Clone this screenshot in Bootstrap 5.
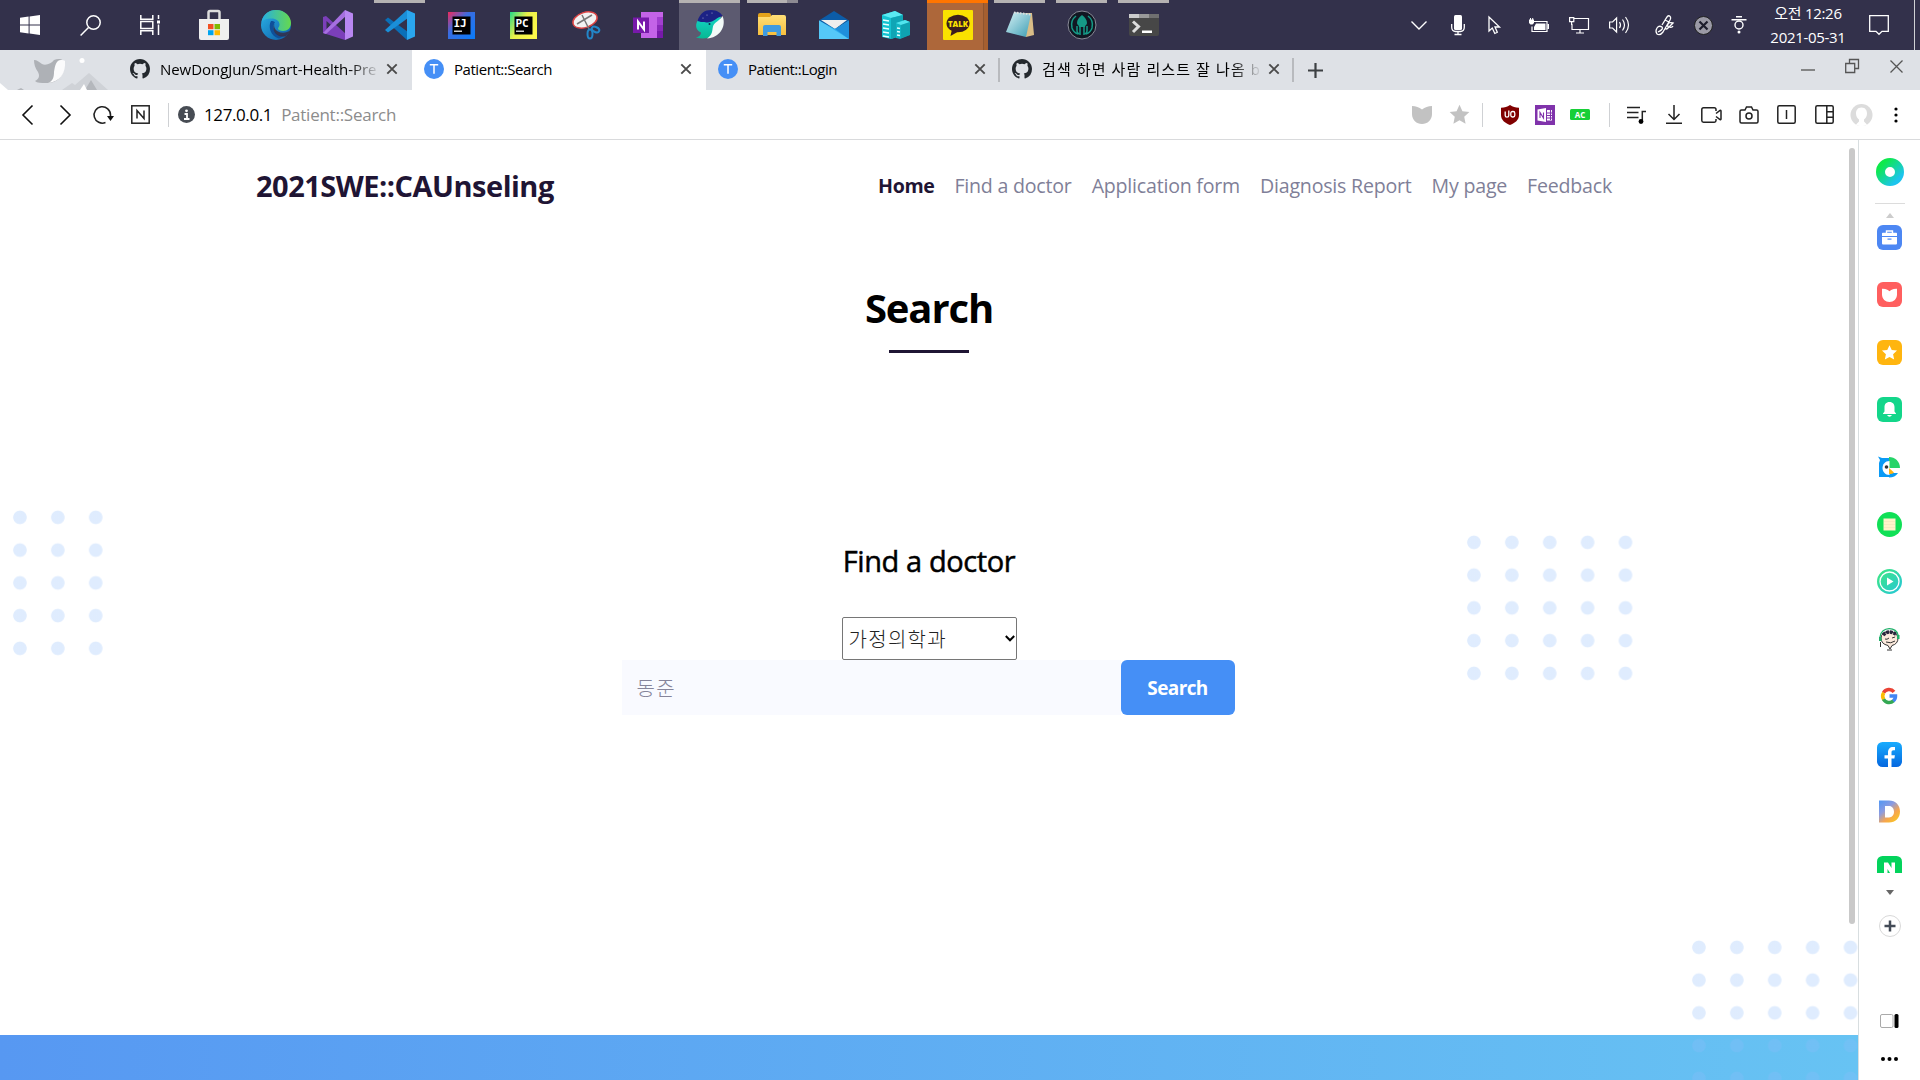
<!DOCTYPE html>
<html lang="ko">
<head>
<meta charset="utf-8">
<title>Patient::Search</title>
<link href="https://cdn.jsdelivr.net/npm/bootstrap@5.3.0/dist/css/bootstrap.min.css" rel="stylesheet">
<style>
body{width:1920px;height:1080px;overflow:hidden;font-family:"Open Sans","Noto Sans CJK KR",sans-serif;color:#000;background:#fff}
svg{flex:none;display:block;overflow:visible}
.cell{display:flex;align-items:center;justify-content:center;flex:none}
/* taskbar */
.taskbar{height:50px;background:#33314b;color:#fff}
.sys{width:60px;height:50px}
.app{width:61px;height:50px;margin-right:1px}
.apps{margin-left:3px}
.run{background:linear-gradient(#b5b2b2,#b5b2b2) 5px 0/51px 3px no-repeat}
.multi{background:linear-gradient(90deg,#b5b2b2 40px,#8d8a92 40px) 6px 0/51px 3px no-repeat}
.active-app{background:linear-gradient(#b5b2b2 3px,#5c5a70 3px)}
.alert-app{background:linear-gradient(#ff7500,#ff7500) 0 0/100% 3px no-repeat,linear-gradient(90deg,#ad673a 56px,#8f552f 56px,#8f552f 57px,#a55f30 57px)}
.clock{width:112px;font-size:15px;line-height:24px;letter-spacing:-.3px;text-align:center}
/* tab strip */
.tabstrip{height:40px;background:#dee1e6;font-size:15px;letter-spacing:-.45px}
.scene{width:118px;height:40px}
.btab{width:294px;height:40px;padding:0 12px 2px;position:relative}
.btab.on{background:#fff}
.btab.div::after{content:"";width:2px;height:24px;background:#b8babe;position:absolute;right:0;top:8px}
.ttl{width:218px;margin:0 8px 0 10px;white-space:nowrap;overflow:hidden;line-height:24px}
.fade-r{-webkit-mask-image:linear-gradient(90deg,#000 190px,transparent 220px)}
.wide{letter-spacing:-.05px}
.ko{letter-spacing:1.1px;font-size:15px}
/* toolbar */
.toolbar{height:50px;border-bottom:1px solid #d9dadc;background:#fff}
.vline{width:1px;height:24px;background:#cfd1d4}
.tray-end{width:26px;padding-left:14px}
.w11{width:11px}.w13{width:13px}.w14{width:14px}.w22{width:22px}.w23{width:23px}.w26{width:26px}.w30{width:30px}.w32{width:32px}.w34{width:34px}.w36{width:36px}.w37{width:37px}.w38{width:38px}.w39{width:39px}.w40{width:40px}.w42{width:42px}.w44{width:44px}.w46{width:46px}.w58{width:58px}
.url{font-size:17px;letter-spacing:-.4px;margin-left:6px}
.url span{color:#8c8c8c;margin-left:9px;letter-spacing:-.25px}
.tools{padding-right:6px}
.winbtns{padding-right:2px}
/* page */
.page{width:1858px;height:940px;position:relative;overflow:hidden}
.sitenav{padding:0 246px 2px 256px;height:93px}
.brandname{font-size:29px;font-weight:700;color:#1f1534;letter-spacing:-.5px}
.menu{gap:20px;font-size:19.6px;letter-spacing:-.22px;color:#7f7f98}
.menu a{color:inherit;text-decoration:none}
.menu a.cur{color:#1f1534;font-weight:700;letter-spacing:-.4px}
.pagehead{height:120px}
.pagehead h1{font-size:40px;font-weight:700;letter-spacing:-1.1px;line-height:50px;margin:50px 0 17px}
.bar{width:80px;height:3px;flex:none;background:#1f1534}
.finder{margin-top:188px}
.finder h2{font-size:29px;font-weight:500;letter-spacing:-.4px;line-height:40px;margin:0 0 36px;-webkit-text-stroke:.5px #000}
.dept{width:175px;height:43px;border:1px solid #767676;border-radius:2px;padding:0 1px 0 6px;font-size:20px;font-weight:300;font-family:"Noto Sans CJK KR",sans-serif;color:#222;letter-spacing:1.3px}
.askrow{padding-right:2px}
.query{width:499px;height:55px;background:#f9faff;color:#86849a;padding-left:15px;font-size:20px;font-weight:300;letter-spacing:1.3px;font-family:"Noto Sans CJK KR",sans-serif}
.go{width:114px;height:55px;background:#458ff6;color:#fff;border-radius:6px;font-size:19px;font-weight:700;letter-spacing:-.6px;padding:2px 0 0}
.dots{position:absolute;background:radial-gradient(circle at 50% 50%,rgba(141,187,251,.28) 6.3px,rgba(141,187,251,0) 7.2px) 0 0/37.9px 32.75px}
.d1{left:1px;top:361px;width:114px;height:164px}
.d2{left:1455px;top:386px;width:190px;height:164px}
.d3{left:1680px;top:791px;width:190px;height:164px}
.foot{position:absolute;left:0;right:0;bottom:0;height:45px;background:linear-gradient(90deg,#5798f2,#67c3f3)}
.thumb{position:absolute;left:1849px;top:8px;width:6px;height:776px;border-radius:3px;background:#c9c9c9}
/* sidebar */
.side{width:62px;height:940px;border-left:1px solid #d8dee0;background:#fff}
.hub{height:64px;width:30px;border-bottom:1px solid #dcdcdc}
.up{height:18px;padding-top:4px}
.rail{height:651px;overflow:hidden;padding-top:3px}
.rail svg{margin-bottom:32.4px}
.h38{height:38px}.h30{height:30px}.h22{height:22px;margin-bottom:10px}
</style>
<script src="https://cdn.jsdelivr.net/npm/bootstrap@5.3.0/dist/js/bootstrap.bundle.min.js"></script>
</head>
<body>
<svg width="0" height="0" class="position-absolute">
<defs>
<linearGradient id="gEdge" x1="0" y1="0" x2="1" y2="1"><stop offset="0" stop-color="#2bb4e8"/><stop offset="1" stop-color="#0c59a4"/></linearGradient>
<linearGradient id="gEdge2" x1="0" y1="0" x2="1" y2="0"><stop offset="0" stop-color="#25aee5"/><stop offset="1" stop-color="#66d94d"/></linearGradient>
<linearGradient id="gIJ" x1="0" y1="0" x2="1" y2="1"><stop offset="0" stop-color="#f0295b"/><stop offset=".4" stop-color="#3a6ce0"/><stop offset="1" stop-color="#087cfa"/></linearGradient>
<linearGradient id="gPC" x1="0" y1="0" x2="1" y2=".6"><stop offset="0" stop-color="#21d789"/><stop offset=".5" stop-color="#e9f04a"/><stop offset="1" stop-color="#fcf84a"/></linearGradient>
<linearGradient id="gFold" x1="0" y1="0" x2="0" y2="1"><stop offset="0" stop-color="#ffdf77"/><stop offset="1" stop-color="#f7bf3e"/></linearGradient>
<linearGradient id="gHub" x1="0" y1="0" x2="1" y2="1"><stop offset=".1" stop-color="#0ee94b"/><stop offset=".9" stop-color="#1cc4ee"/></linearGradient>
<linearGradient id="gPlay" x1="0" y1="0" x2="1" y2="1"><stop offset="0" stop-color="#3ee97d"/><stop offset="1" stop-color="#25c5dd"/></linearGradient>
<linearGradient id="gFb" x1="0" y1="0" x2="0" y2="1"><stop offset="0" stop-color="#18acfe"/><stop offset="1" stop-color="#0567df"/></linearGradient>
<linearGradient id="gD" x1="0" y1="0" x2=".8" y2="1"><stop offset="0" stop-color="#4f97f5"/><stop offset=".4" stop-color="#8c9be0"/><stop offset=".7" stop-color="#f7a54f"/><stop offset="1" stop-color="#f9c621"/></linearGradient>
<linearGradient id="gWh" x1="0" y1="0" x2="0" y2="1"><stop offset="0" stop-color="#12d3c4"/><stop offset="1" stop-color="#08b893"/></linearGradient>
<linearGradient id="gPad" x1="0" y1="0" x2="1" y2="1"><stop offset="0" stop-color="#d8f2f5"/><stop offset="1" stop-color="#3c9db4"/></linearGradient>
<symbol id="git" viewBox="0 0 16 16"><path fill="#24292e" d="M8 0C3.58 0 0 3.58 0 8c0 3.54 2.29 6.53 5.47 7.59.4.07.55-.17.55-.38 0-.19-.01-.82-.01-1.49-2.01.37-2.53-.49-2.69-.94-.09-.23-.48-.94-.82-1.13-.28-.15-.68-.52-.01-.53.63-.01 1.08.58 1.23.82.72 1.21 1.87.87 2.33.66.07-.52.28-.87.51-1.07-1.78-.2-3.64-.89-3.64-3.95 0-.87.31-1.59.82-2.15-.08-.2-.36-1.02.08-2.12 0 0 .67-.21 2.2.82a7.6 7.6 0 0 1 4 0c1.53-1.04 2.2-.82 2.2-.82.44 1.1.16 1.92.08 2.12.51.56.82 1.27.82 2.15 0 3.07-1.87 3.75-3.65 3.95.29.25.54.73.54 1.48 0 1.07-.01 1.93-.01 2.2 0 .21.15.46.55.38A8.01 8.01 0 0 0 16 8c0-4.42-3.58-8-8-8z"/></symbol>
<symbol id="cls" viewBox="0 0 12 12"><path d="M1.3 1.3l9.4 9.4M10.7 1.3l-9.4 9.4" stroke="#4a4a4a" stroke-width="1.9"/></symbol>
<symbol id="tee" viewBox="0 0 20 20"><circle cx="10" cy="10" r="10" fill="#458ff6"/><path d="M5.8 5.700h8.400M10 5.700v9" stroke="#fff" stroke-width="1.500"/></symbol>
<symbol id="star" viewBox="0 0 20 20"><path d="M10 .8l2.8 6 6.600.8-4.900 4.500 1.300 6.600L10 15.500l-5.800 3.200 1.300-6.600L.6 7.600l6.600-.8z"/></symbol>
<symbol id="pocket" viewBox="0 0 20 18"><path d="M0 0c4 .3 7 1.300 10 3.500C13 1.300 16 .3 20 0v8c0 6-4.500 10-10 10S0 14 0 8z"/></symbol>
</defs>
</svg>

<header class="taskbar d-flex">
  <div class="cell sys"><svg width="20" height="20"><path fill="#fff" d="M0 2.800L8.600 1.600v8H0zM9.600 1.400L20 0v9.600H9.600zM0 10.500h8.600v8L0 17.200zM9.600 10.500H20V20L9.600 18.600z"/></svg></div>
  <div class="cell sys"><svg width="21" height="21" fill="none" stroke="#fff" stroke-width="1.500"><circle cx="13.500" cy="7.500" r="6.700"/><path d="M8.500 12.500L.6 20.500"/></svg></div>
  <div class="cell sys"><svg width="20" height="20" fill="none" stroke="#fff" stroke-width="1.500"><path d="M.8 0v4.200h12V0M.8 20v-4.200h12V20M.8 6.500h12v7H.8zM18.500 0v4M18.500 9.500V20"/><path d="M17 7h3" stroke-width="3"/></svg></div>
  <div class="apps d-flex">
  <div class="cell app"><svg width="30" height="30"><path d="M9.500 10V2.500q0-1.500 1.500-1.500h8q1.500 0 1.500 1.500V10" fill="none" stroke="#ddd" stroke-width="2.500"/><path fill="#efefef" d="M0 9h30v19q0 2-2 2H2q-2 0-2-2z"/><path fill="#f25022" d="M9 14h5.500v5.200H9z"/><path fill="#7fba00" d="M15.500 14H21v5.200h-5.500z"/><path fill="#00a4ef" d="M9 20.200h5.500v5H9z"/><path fill="#ffb900" d="M15.500 20.200H21v5h-5.500z"/></svg></div>
  <div class="cell app"><svg width="30" height="30"><circle cx="15" cy="15" r="15" fill="url(#gEdge)"/><path fill="url(#gEdge2)" d="M.5 12C2 4 8 0 15 0c9 0 15 6.500 15 13 0 5-3.500 8-8 8-3 0-5-1.200-5-2.500 0-1 1.500-1.500 1.500-4C18.500 11 15 8.500 10.500 8.500 6 8.500 2 10 .5 12z"/><path fill="#0f4f99" d="M10 11c-3 5-1 15 8 17.500l8-4c-1 .5-3 .8-5 .8-6 0-9-5-8.500-9 .2-2 .8-3 1.500-4-1-1-3-1.500-4-1.300z"/><path fill="#33314b" d="M14 13c-1.500 1.500-1.200 6.500 3 8.500 4 2 9 1.500 12.500-1.500-1 3-3 5-5 6.300-5 1-10-1-11.500-5.300-1-3-.5-6.500 1-8z" opacity=".9"/></svg></div>
  <div class="cell app"><svg width="30" height="30"><path fill="#7b3fb9" fill-rule="evenodd" d="M0 7l3-1 20 18-1 6L0 23zM3.500 11v8l4.500-4z"/><path fill="#a66fe0" d="M0 23l3 1L23 6l-1-6z"/><path fill="#b987f2" d="M22 0l8 3.500v23L22 30z"/></svg></div>
  <div class="cell app run"><svg width="30" height="30"><path fill="#0a6fb7" d="M0 10l3-2.500L23 22l-1 8z"/><path fill="#1a8fd8" d="M0 20l3 2.500L23 8l-1-8z"/><path fill="#2aa6ee" d="M22 0l8 3.500v23L22 30z"/></svg></div>
  <div class="cell app"><svg width="27" height="27"><path fill="url(#gIJ)" d="M0 0h27v27H0z"/><path d="M4.500 4.500h18v18h-18z"/><text x="5.500" y="14.500" font-family="DejaVu Sans Mono" font-weight="700" font-size="11" fill="#fff">IJ</text><path fill="#ccc" d="M6 18.500h8v1.500H6z"/></svg></div>
  <div class="cell app"><svg width="27" height="27"><path fill="url(#gPC)" d="M0 0h27v27H0z"/><path d="M4.500 4.500h18v18h-18z"/><text x="5.500" y="14.500" font-family="DejaVu Sans Mono" font-weight="700" font-size="11" fill="#fff">PC</text><path fill="#ccc" d="M6 18.500h8v1.500H6z"/></svg></div>
  <div class="cell app"><svg width="28" height="28"><ellipse cx="13" cy="9" rx="12.500" ry="7.500" fill="#f2f2f2" stroke="#dc4545" stroke-width="1.500" transform="rotate(-18 13 9)"/><path d="M5 13L20 4M10 4l7 14" stroke="#777" stroke-width="1.500"/><g fill="none" stroke="#2386c8" stroke-width="2"><ellipse cx="18" cy="23" rx="2.500" ry="4.500"/><ellipse cx="23.500" cy="18.500" rx="4" ry="2.500" transform="rotate(25 23.500 18.500)"/></g></svg></div>
  <div class="cell app"><svg width="30" height="26"><path fill="#c463e8" d="M8 0h22v26H8z"/><path fill="#a23fd0" d="M24 5h6v8h-6z"/><path fill="#8929b9" d="M24 13h6v7h-6z"/><path fill="#7719aa" d="M24 19h6v7h-6zM0 5.500h16v15.500H0z"/><path d="M5 17.500v-8l6 8v-8" fill="none" stroke="#fff" stroke-width="2"/></svg></div>
  <div class="cell app active-app"><svg width="30" height="30"><path fill="url(#gWh)" d="M3 10C-1 16 2 21 6 22.500 6 25 4 27 1 27.500 9 30 21 28 21 19L26 7 12 8z"/><path fill="#f2faf8" d="M27.500 6C32 17 24 28 12 28.500c6-4 5-8 6-12C19 12 25 11 27.500 6z"/><path fill="#1c2285" d="M2.500 11C5 3 10 0 16 0c6 0 10 3 11.700 6C22 7 19 12 13 12.500c-2 .2-3-.5-4.500-.5-2 0-3 0-6-1z"/><circle cx="14.500" cy="14" r="1" fill="#0b2c50"/><circle cx="12" cy="5" r=".6" fill="#aac"/><circle cx="17" cy="3" r=".6" fill="#aac"/><circle cx="8" cy="8" r=".6" fill="#aac"/></svg></div>
  <div class="cell app multi"><svg width="28" height="24"><path fill="#e3a21a" d="M0 2q0-2 2-2h9q2 0 2 2v4H0z"/><path fill="url(#gFold)" d="M0 4h12l2-2h12q2 0 2 2v18H0z"/><path fill="#3f9be0" d="M5 23V14q0-2 2-2h14q2 0 2 2v9h-4.500v-4h-9v4z"/></svg></div>
  <div class="cell app"><svg width="30" height="28"><path fill="#0c5ca8" d="M0 9.500L15 0l15 9.500L15 18z"/><path fill="#eee" d="M2 9h26L16 18z"/><path fill="#2fb0ee" d="M0 9.500l16 8.500 14-8.500V28H0z"/><path fill="#55c8f8" d="M0 9.500V28h30z"/><path fill="#1f8fdc" d="M16 18l14-8.500V28z"/></svg></div>
  <div class="cell app"><svg width="28" height="28"><path fill="#15c3d1" d="M0 4L13 0l8 4v20L9 28 0 26z"/><path fill="#5aeaf2" d="M0 4L13 0l8 4-12 3z"/><path fill="#0fa5b5" d="M9 7l12-3v20L9 28z"/><path fill="#11b4c3" d="M14 12l9-3 5 2v13l-10 4-4-1z"/><path fill="#51e5ee" d="M14 12l9-3 5 2-9 3z"/><path fill="#0d8f9f" d="M19 14l9-3v13l-9 3z" opacity=".5"/><path stroke="#e6ffff" stroke-width="1.300" d="M1 9l6 1M1 13l6 1M1 17l6 1M1 21l6 1M1 25l6 1M15 17l3 .5M15 20.500l3 .5M15 24l3 .5"/></svg></div>
  <div class="cell app alert-app"><svg width="30" height="30"><rect width="30" height="30" rx="1" fill="#fae100"/><ellipse cx="15" cy="13.500" rx="11.500" ry="8.800" fill="#3b1e1e"/><path fill="#3b1e1e" d="M9 19l-1.500 7 7-4z"/><text x="15" y="16.700" text-anchor="middle" font-family="Open Sans" font-weight="800" font-size="7.800" fill="#fae100">TALK</text></svg></div>
  <div class="cell app run"><svg width="28" height="28"><path fill="#d9bd87" d="M8 2h18l2 22-8 2z"/><path fill="url(#gPad)" d="M8 1l17 2-5 23L0 21z"/><path stroke="#ddd" stroke-width="2" stroke-dasharray="1.500 1.500" d="M8 1.500l17 2"/></svg></div>
  <div class="cell app run"><svg width="30" height="30"><circle cx="15" cy="15" r="14" fill="#111722" stroke="#8a8a98" stroke-width="1"/><g fill="none" stroke="#159a86" stroke-width="1.500"><path d="M9 6C5 9 4 14 5 18c1 3 3 5 6 6M21 6c4 3 5 8 4 12-1 3-3 5-6 6M10 16v5q0 2 2 3M20 16v5q0 2-2 3M13 15v10M17 15v10"/></g><path fill="#159a86" d="M15 5c3 2 5 5 5 8 0 2-2 2-2 4h-6c0-2-2-2-2-4 0-3 2-6 5-8z"/></svg></div>
  <div class="cell app run"><svg width="30" height="22"><path fill="#474747" d="M0 0h30v20q0 2-2 2H2q-2 0-2-2z"/><path fill="#ccc" d="M0 0h10v4H0z"/><path fill="#999" d="M10 0h10v4H10z"/><path fill="#707070" d="M20 0h10v4H20z"/><path d="M4 7.500l5.500 5L4 18" fill="none" stroke="#ddd" stroke-width="3"/><path fill="#fff" d="M13 16.500h10v2.500H13z"/></svg></div>
  </div>

  <div class="d-flex ms-auto">
    <div class="cell w38"><svg width="16" height="9"><path d="M.5.5L8 8 15.500.5" fill="none" stroke="#fff" stroke-width="1.400"/></svg></div>
    <div class="cell w40"><svg width="14" height="20"><rect x="3" width="8" height="15" rx="1.500" fill="#fff"/><path d="M.7 9v3q0 4.500 4 4.500h4.600q4 0 4-4.500V9M7 16.500V20M3.500 19.500h7" fill="none" stroke="#fff" stroke-width="1.300"/></svg></div>
    <div class="cell w32"><svg width="12" height="18"><path d="M1 1v14l3.300-3 2.500 5.500 2.500-1.200L7 11h4.500z" fill="none" stroke="#fff" stroke-width="1.300"/></svg></div>
    <div class="cell w58"><svg width="20" height="15"><path d="M5 3.500h13v10H3V8.500" fill="none" stroke="#fff" stroke-width="1.200"/><path fill="#fff" d="M7 5.500h9.500v6.500H5V9zM18.500 6H20v5h-1.500zM0 1.500h5V5L3.500 6.500h-2L0 5zM1 0h1v2H1zM3.200 0h1v2h-1z"/></svg></div>
    <div class="cell w22"><svg width="20" height="17" fill="none" stroke="#fff" stroke-width="1.200"><path d="M5 1.500h14.500v11H3V7M7 16h8M11 12.500V16M.6.6h4.200v4H.6zM2.600 4.600V8"/></svg></div>
    <div class="cell w58"><svg width="21" height="18" fill="none" stroke="#fff" stroke-width="1.200"><path d="M.6 6h3l4-4v14l-4-4h-3zM10.500 6q2 3 0 6M13.500 3.500q4 5.500 0 11M16.500 1q6 8 0 16"/></svg></div>
    <div class="cell w32"><svg width="20" height="20" fill="none" stroke="#fff" stroke-width="1.300"><path d="M8 10L13 2q2-2.500 3.500 0 .5 1-.5 3L9 17q-3 4-6 2-2-3 0-6 2-3 5-1 2 2-4 5M11 5l4 2M11 13q1 2 3 0l5-5q-4-1-5 1-1 3 1 3 3 1 4-1"/></svg></div>
    <div class="cell w46"><svg width="19" height="19"><circle cx="9.500" cy="9.500" r="9" fill="#9b9aa6" stroke="#222"/><path d="M5.500 5.500l8 8M13.500 5.500l-8 8" stroke="#1d1d2c" stroke-width="2.200"/></svg></div>
    <div class="cell w26"><svg width="16" height="18" fill="none" stroke="#fff" stroke-width="1.400"><path d="M5 .7h6M.5 3.700h15"/><circle cx="8" cy="9" r="4"/><circle cx="8" cy="16" r="1.500" fill="#fff" stroke="none"/></svg></div>
    <div class="clock d-flex flex-column justify-content-center"><div>오전 12:26</div><div>2021-05-31</div></div>
    <div class="cell w30"><svg width="20" height="20"><path d="M.7.7h18.600v15.600H13L10 19.300 7 16.300H.7z" fill="none" stroke="#fff" stroke-width="1.300"/></svg></div>
    <div class="cell tray-end"><div class="vline h-100"></div></div>
  </div>
</header>

<div class="tabstrip d-flex">
  <svg class="scene" viewBox="0 0 118 40"><path fill="#fff" d="M0 33l8 7H0z"/><path fill="#cfd2d7" d="M62 40l10-7 3 2 14-12 19 17z"/><path fill="#b4b7bc" d="M85 40l6-10 6 10zM17 40l4-2 3 2z"/><path fill="#fff" d="M80 40l4-6 3 6z"/><circle cx="82" cy="10.500" r="2.500" fill="#fff"/><path fill="#aeb1b6" d="M34 10c3 0 5 2 8 4 4 2 10-1 12-4 5-2 11-1 10 5 0 12-8 19-18 18-5 0-9 0-11-2 4-2 5-5 3-9-3-4-4-8-4-12z"/><path fill="#fbfbfc" d="M65 11c1 12-5 21-17 22 5-2 6-6 6-11 1-6 2-12 7-12 2 0 3 0 4 1z"/></svg>
  <div class="btab d-flex align-items-center"><svg width="20" height="20"><use href="#git"/></svg><div class="ttl fade-r wide">NewDongJun/Smart-Health-Pre</div><svg width="12" height="12"><use href="#cls"/></svg></div>
  <div class="btab on d-flex align-items-center"><svg width="20" height="20"><use href="#tee"/></svg><div class="ttl">Patient::Search</div><svg width="12" height="12"><use href="#cls"/></svg></div>
  <div class="btab div d-flex align-items-center"><svg width="20" height="20"><use href="#tee"/></svg><div class="ttl">Patient::Login</div><svg width="12" height="12"><use href="#cls"/></svg></div>
  <div class="btab div d-flex align-items-center"><svg width="20" height="20"><use href="#git"/></svg><div class="ttl fade-r ko">검색 하면 사람 리스트 잘 나옴 b</div><svg width="12" height="12"><use href="#cls"/></svg></div>
  <div class="cell w42"><svg width="15" height="15"><path d="M7.500 0v15M0 7.500h15" stroke="#3c4043" stroke-width="2.200"/></svg></div>
  <div class="winbtns d-flex ms-auto pb-2">
    <div class="cell w44"><svg width="14" height="2" class="mt-2"><path d="M0 1h14" stroke="#666" stroke-width="1.500"/></svg></div>
    <div class="cell w44"><svg width="14" height="14" fill="none" stroke="#555" stroke-width="1.300"><path d="M.7 4.500h9v9h-9zM4.500 4.500v-4h9v9h-4"/></svg></div>
    <div class="cell w44"><svg width="13" height="13"><path d="M.5.5l12 12M12.500.5l-12 12" stroke="#555" stroke-width="1.300"/></svg></div>
  </div>
</div>

<div class="toolbar d-flex align-items-center">
  <div class="d-flex align-items-center ms-2 ps-1">
    <div class="cell w30"><svg width="11" height="20"><path d="M10.500.5L1 10l9.500 9.500" fill="none" stroke="#111" stroke-width="1.600"/></svg></div>
    <div class="cell w46"><svg width="11" height="20"><path d="M.5.5L10 10 .5 19.500" fill="none" stroke="#111" stroke-width="1.600"/></svg></div>
    <div class="cell w30"><svg width="19" height="18"><path d="M11.500 16.500A8.200 8.200 0 1 1 16.500 9v3" fill="none" stroke="#222" stroke-width="1.600"/><path d="M13 10h7l-3.500 5z" fill="#111"/></svg></div>
    <div class="cell w44"><svg width="19" height="19"><rect x=".8" y=".8" width="17.400" height="17.400" fill="none" stroke="#222" stroke-width="1.500"/><path d="M6 13.500V5.500l7 8V5.500" fill="none" stroke="#222" stroke-width="1.500"/></svg></div>
    <div class="cell w13"><div class="vline"></div></div>
    <div class="cell w23"><svg width="17" height="17"><circle cx="8.500" cy="8.500" r="8.500" fill="#474c54"/><circle cx="8.500" cy="4.800" r="1.400" fill="#fff"/><path d="M6.500 8h2.500v5M6 13h5.500" fill="none" stroke="#fff" stroke-width="1.800"/></svg></div>
    <div class="url">127.0.0.1<span>Patient::Search</span></div>
  </div>
  <div class="tools d-flex align-items-center ms-auto">
    <div class="cell w39"><svg width="20" height="18" fill="#c2c2c2"><use href="#pocket"/></svg></div>
    <div class="cell w36"><svg width="21" height="21" fill="#c2c2c2"><use href="#star"/></svg></div>
    <div class="cell w11"><div class="vline"></div></div>
    <div class="cell w44"><svg width="18" height="20"><path fill="#800000" d="M9 0c3 2 5 2.500 9 2.700V10c0 5-4 8-9 10-5-2-9-5-9-10V2.700C4 2.500 6 2 9 0z"/><path d="M4.200 6.500v4q0 1.700 1.800 1.700t1.800-1.700V5.500" fill="none" stroke="#fff" stroke-width="1.300"/><rect x="9.800" y="6.500" width="4" height="5.500" rx="1.700" fill="none" stroke="#fff" stroke-width="1.300"/></svg></div>
    <div class="cell w26"><svg width="20" height="20"><path fill="#8033ab" d="M0 0h20v20H0z"/><path fill="#fff" d="M2.500 4.500L11 3v14l-8.500-1.500zM12 5h5v10.500h-5z"/><path d="M5 13V7.500l3.500 5.500V7.500M12 8h5M12 10.500h5M12 13h5M15.500 5v10" fill="none" stroke="#8033ab" stroke-width="1.100"/></svg></div>
    <div class="cell w44"><svg width="20" height="11"><rect width="20" height="11" rx="1.500" fill="#18cf37"/><text x="10" y="8.500" font-size="8" font-weight="700" text-anchor="middle" fill="#fff">AC</text></svg></div>
    <div class="cell w14"><div class="vline"></div></div>
    <div class="cell w40"><svg width="19" height="18"><path d="M0 1.500h13M0 6.500h11.500M0 11.500h11.500M15.300 15V5.500H19" fill="none" stroke="#222" stroke-width="1.500"/><circle cx="14" cy="15.500" r="2.400"/></svg></div>
    <div class="cell w36"><svg width="16" height="19"><path d="M8 0v14M2.500 9l5.500 5.500L13.500 9M0 18.200h16" fill="none" stroke="#222" stroke-width="1.500"/></svg></div>
    <div class="cell w38"><svg width="21" height="16"><path d="M15 4V2.500Q15 .8 13.300.8H2.500Q.8.800.8 2.500v11q0 1.700 1.700 1.700h10.800q1.700 0 1.700-1.700V12M15 6.500l4-3q1-.5 1 .5v8q0 1-1 .5l-4-3" fill="none" stroke="#222" stroke-width="1.500"/></svg></div>
    <div class="cell w38"><svg width="20" height="18" fill="none" stroke="#222" stroke-width="1.500"><path d="M2.500 4H6l1.500-3h5L14 4h3.500Q19 4 19 5.500v10Q19 17 17.500 17h-15Q1 17 1 15.500v-10Q1 4 2.500 4z"/><circle cx="10" cy="10" r="3"/></svg></div>
    <div class="cell w37"><svg width="19" height="19" fill="none" stroke="#222" stroke-width="1.500"><rect x=".8" y=".8" width="17.400" height="17.400" rx="1.500"/><path d="M9.500 5v9"/></svg></div>
    <div class="cell w39"><svg width="19" height="19" fill="none" stroke="#222" stroke-width="1.500"><rect x=".8" y=".8" width="17.400" height="17.400" rx="1.500"/><path d="M11.800 1v17M12 6.700h6M12 12.300h6"/></svg></div>
    <div class="cell w34"><svg width="23" height="22"><circle cx="11.500" cy="11" r="11" fill="#dcdcdc"/><path d="M11.500 3.500c4 0 5.500 3 5.500 6s-1.500 5-3 6v2l3 3c-3 2-8 2-11 0l3-3v-2c-1.500-1-3-3-3-6s1.500-6 5.500-6z" fill="#fff"/></svg></div>
    <div class="cell w36"><svg width="4" height="16"><circle cx="2" cy="2" r="1.600"/><circle cx="2" cy="8" r="1.600"/><circle cx="2" cy="14" r="1.600"/></svg></div>
  </div>
</div>

<div class="d-flex">
<main class="page">
  <div class="foot"></div>
  <div class="dots d1"></div><div class="dots d2"></div><div class="dots d3"></div>
  <div class="thumb"></div>
  <nav class="sitenav d-flex align-items-center justify-content-between">
    <div class="brandname">2021SWE::CAUnseling</div>
    <div class="menu d-flex"><a class="cur" href="#">Home</a><a href="#">Find a doctor</a><a href="#">Application form</a><a href="#">Diagnosis Report</a><a href="#">My page</a><a href="#">Feedback</a></div>
  </nav>
  <section class="pagehead d-flex flex-column align-items-center"><h1>Search</h1><div class="bar"></div></section>
  <section class="finder d-flex flex-column align-items-center">
    <h2>Find a doctor</h2>
    <div class="dept d-flex align-items-center justify-content-between">가정의학과<svg width="10" height="7"><path d="M.8 1L5 5.300 9.200 1" fill="none" stroke="#000" stroke-width="2"/></svg></div>
    <div class="askrow d-flex"><div class="query d-flex align-items-center">동준</div><button class="btn go" type="button">Search</button></div>
  </section>
</main>

<aside class="side d-flex flex-column align-items-center">
  <div class="cell hub"><svg width="28" height="28"><circle cx="14" cy="14" r="9.500" fill="none" stroke="url(#gHub)" stroke-width="9"/></svg></div>
  <div class="cell up"><svg width="8" height="5"><path fill="#ccc" d="M4 0l4 5H0z"/></svg></div>
  <div class="rail d-flex flex-column align-items-center">
    <svg width="25" height="25"><rect width="25" height="25" rx="6" fill="#4d87f3"/><path d="M9.500 8V6h6v2" fill="none" stroke="#fff" stroke-width="1.400"/><path fill="#fff" d="M5 8.500q0-.8.800-.8h13.400q.8 0 .8.800V11H5zM5 12h15v6.500q0 1-1 1H6q-1 0-1-1z"/><path fill="#4d87f3" d="M10.500 13.500h4v1.200h-4z"/></svg>
    <svg width="25" height="25"><rect width="25" height="25" rx="6" fill="#ff5f5f"/><svg x="5" y="6.500" width="15" height="13.500" fill="#fff"><use href="#pocket"/></svg></svg>
    <svg width="25" height="25"><rect width="25" height="25" rx="6" fill="#ffb50f"/><svg x="4.500" y="4.500" width="16" height="16" fill="#fff"><use href="#star"/></svg></svg>
    <svg width="25" height="25"><rect width="25" height="25" rx="6" fill="#13d68a"/><path fill="#fff" d="M12.500 5C9 5 7.500 7.500 7.500 10v4.500L6 16.500V17h13v-.5l-1.500-2V10c0-2.500-1.500-5-5-5zM10 18h5q-1 1.800-2.500 1.800T10 18z"/></svg>
    <svg width="25" height="25"><path fill="#0a9af5" d="M1 1.500l4 1.500h7v19H2V8l1-3z"/><path fill="#26d468" d="M12 2c6 0 11 4.500 11 11H12z"/><path fill="#0a9af5" d="M12 18l9 0c-2 3-5 4.500-9 4.500z"/><path fill="#fff" d="M12.500 6v14C8 20 5.500 16.500 5.500 13S8 6 12.500 6z"/><path fill="#ffb411" d="M12 13l5 4.500q-2 2-5 1.500z"/><circle cx="9.500" cy="12" r="1.800" fill="#333"/></svg>
    <svg width="25" height="25"><circle cx="12.500" cy="12.500" r="12.500" fill="#10e056"/><path fill="#fff3ca" d="M6.500 6.500h12v12h-12z"/><path d="M7 9.500h11M7 12.500h11M7 15.500h11" stroke="#f3e9bf" stroke-width=".8"/></svg>
    <svg width="25" height="25"><circle cx="12.500" cy="12.500" r="12.500" fill="url(#gPlay)"/><circle cx="12.500" cy="12.500" r="9.500" fill="none" stroke="#fff" stroke-width="1.300"/><path fill="#fff" d="M10 8.500l6.500 4-6.500 4z"/></svg>
    <svg width="25" height="25"><path fill="#fbe9dc" stroke="#333" d="M4 11q0-6 8.500-6T21 11q0 6-6 7.500L13 22l-2-3.500Q4 17 4 11z"/><path d="M6 8q6-6 14 0" fill="none" stroke="#28253c" stroke-width="3.500" stroke-dasharray="3 .8"/><path d="M3 10C4-1 20-1 21.500 9" fill="none" stroke="#20b06a" stroke-width="1.300"/><rect x="2" y="10" width="2.500" height="4" fill="#20b06a"/><rect x="20" y="8" width="2.500" height="4" fill="#20b06a"/><path d="M8 12q2 1 4-1M15 11l3-1M9 15q5 2 9-1M3.500 15v5M10 23h5" fill="none" stroke="#333" stroke-width="1"/></svg>
    <svg width="25" height="25" fill="none" stroke-width="3.500"><path stroke="#ea4335" d="M6.500 8.800A6.300 6.300 0 0 1 17 7.800"/><path stroke="#fbbc05" d="M6.700 15.500a6.300 6.300 0 0 1 0-6.800"/><path stroke="#34a853" d="M16.500 16.800a6.300 6.300 0 0 1-10-1.600"/><path stroke="#4285f4" d="M12.500 12h6a6.300 6.300 0 0 1-2.300 5"/></svg>
    <svg width="25" height="25"><rect width="25" height="25" rx="5.500" fill="url(#gFb)"/><path fill="#fff" d="M11 25v-8.500H7.500v-3.300H11V10.500C11 7 13 5 16 5h2v3.300h-1.500c-1.300 0-2 .7-2 2v2.900h3.400l-.5 3.300h-2.900V25z"/></svg>
    <svg width="25" height="25"><path fill="url(#gD)" fill-rule="evenodd" d="M2 1.500h10c6.500 0 11 4.500 11 11s-4.500 11-11 11H2zM8 7v11.500h4c3 0 5-2.500 5-5.700S15 7 12 7z"/></svg>
    <svg width="25" height="25"><rect width="25" height="25" rx="5.500" fill="#03d35c"/><path fill="#fff" d="M7 6.500h4l3.500 5.500V6.500H18v12h-4L10.500 13v5.500H7z"/></svg>
  </div>
  <div class="cell h38"><svg width="8" height="5"><path fill="#666" d="M0 0h8L4 5z"/></svg></div>
  <div class="cell h30"><svg width="22" height="22"><circle cx="11" cy="11" r="10.500" fill="#fff" stroke="#d9d9d9"/><path d="M11 5.500v11M5.500 11h11" stroke="#434b57" stroke-width="2.500"/></svg></div>
  <div class="cell h38 mt-auto"><svg width="19" height="14"><rect x=".5" y=".5" width="12.500" height="13" rx="1.500" fill="#fff" stroke="#aaa"/><rect x="14.500" width="4" height="14" rx="1.500"/></svg></div>
  <div class="my-1"></div>
  <div class="cell h22"><svg width="17" height="4"><circle cx="2" cy="2" r="2"/><circle cx="8.500" cy="2" r="2"/><circle cx="15" cy="2" r="2"/></svg></div>
</aside>
</div>
</body>
</html>
